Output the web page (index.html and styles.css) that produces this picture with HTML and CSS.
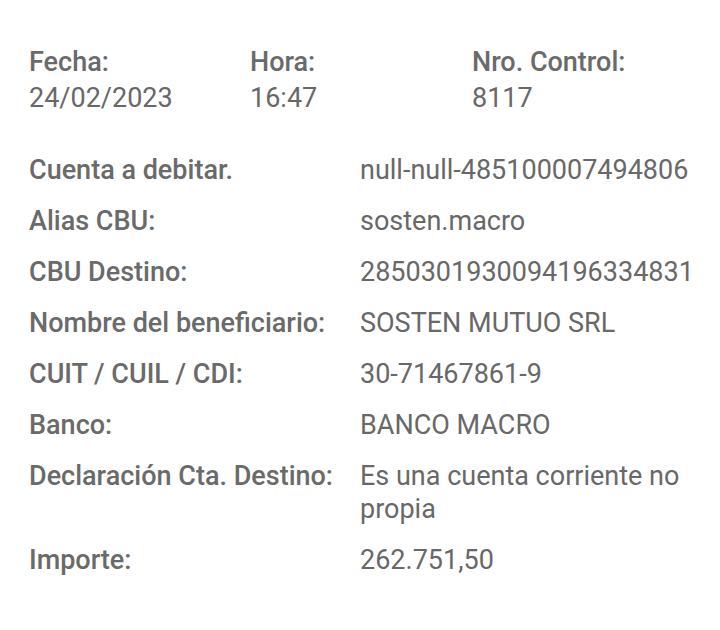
FILE: index.html
```html
<!DOCTYPE html>
<html lang="es">
<head>
<meta charset="utf-8">
<link rel="stylesheet" href="styles.css">
</head>
<body>
<main class="receipt">
  <section class="header">
    <div class="hcol">
      <div class="label">Fecha:</div>
      <div class="value">24/02/2023</div>
    </div>
    <div class="hcol">
      <div class="label">Hora:</div>
      <div class="value">16:47</div>
    </div>
    <div class="hcol">
      <div class="label">Nro. Control:</div>
      <div class="value">8117</div>
    </div>
  </section>
  <section class="details">
    <div class="label">Cuenta a debitar.</div>
    <div class="value">null-null-485100007494806</div>
    <div class="label">Alias CBU:</div>
    <div class="value">sosten.macro</div>
    <div class="label">CBU Destino:</div>
    <div class="value">2850301930094196334831</div>
    <div class="label">Nombre del beneficiario:</div>
    <div class="value">SOSTEN MUTUO SRL</div>
    <div class="label">CUIT / CUIL / CDI:</div>
    <div class="value">30-71467861-9</div>
    <div class="label">Banco:</div>
    <div class="value">BANCO MACRO</div>
    <div class="label">Declaración Cta. Destino:</div>
    <div class="value">Es una cuenta corriente no propia</div>
    <div class="label">Importe:</div>
    <div class="value">262.751,50</div>
  </section>
</main>
</body>
</html>
```
FILE: styles.css
```css
html, body {
  margin: 0;
  padding: 0;
  background: #ffffff;
}
body {
  font-family: Roboto, "Noto Sans", sans-serif;
  font-size: 27px;
  color: #666666;
}
.receipt {
  padding: 44px 16px 0 29px;
}
.header {
  display: grid;
  grid-template-columns: 221px 222px 1fr;
  line-height: 36px;
}
.label {
  font-weight: 500;
  color: #6a6a6a;
  white-space: nowrap;
}
.value {
  font-weight: 400;
  color: #686868;
}
.details {
  margin-top: 38px;
  display: grid;
  grid-template-columns: 331px 1fr;
  row-gap: 18px;
  line-height: 33px;
}
```
